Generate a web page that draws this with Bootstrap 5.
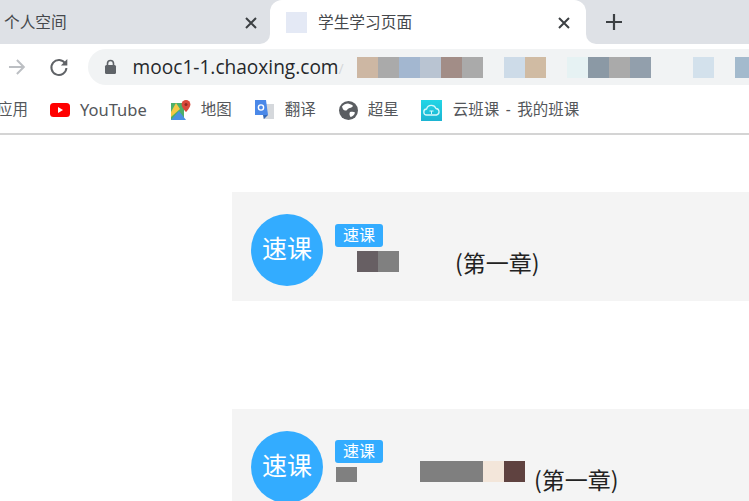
<!DOCTYPE html>
<html lang="zh-CN">
<head>
    <meta charset="UTF-8">
    <title>学生学习页面</title>
    <link href="https://cdn.jsdelivr.net/npm/bootstrap@5.3.0/dist/css/bootstrap.min.css" rel="stylesheet">
    <script src="https://cdn.jsdelivr.net/npm/bootstrap@5.3.0/dist/js/bootstrap.bundle.min.js"></script>
    <style>
        html, body { height: 100%; overflow: hidden; }
        body { font-family: "Noto Sans", "Noto Sans CJK SC", sans-serif; background: #fff; }

        /* tab strip */
        .tab-strip { height: 44px; background: linear-gradient(#dee1e6 50%, #fff 50%); font-size: 15.7px; color: #45484c; }
        .tab-off { width: 270px; background: #dee1e6; border-bottom-right-radius: 10px; padding: 1px 13px 0 4px; }
        .tab-on { width: 316px; background: #fff; border-radius: 12px 12px 0 0; padding: 1px 16px 0 16px; }
        .tab-rest { background: #dee1e6; border-bottom-left-radius: 10px; padding-left: 19px; }
        .fav-box { width: 21px; height: 21px; background: #e4e9f5; margin-right: 11px; }

        /* address row */
        .tool-row { height: 44px; padding-top: 5px; }
        .nav-arrow { margin-left: 7px; margin-right: 22px; }
        .addr-bar { height: 36px; margin-left: 19px; background: #f1f3f4; border-radius: 18px 0 0 18px; padding-left: 16px; }
        .addr-url { font-family: "Open Sans", sans-serif; font-size: 19.1px; color: #26282b; margin-left: 16px; width: 224px; flex-shrink: 0; white-space: nowrap; }
        .addr-slash { color: #d5d7d9; font-size: 14px; }
        .px { display: block; width: 21px; height: 21px; flex-shrink: 0; }
        .gap-1px { width: 21px; flex-shrink: 0; }

        /* bookmarks */
        .mark-row { height: 47px; border-bottom: 2px solid #d4d4d4; font-size: 15.5px; color: #54575b; white-space: nowrap; padding-bottom: 1px; }
        .mark-item { flex-shrink: 0; }
        .mark-item svg { margin-right: 10px; flex-shrink: 0; }
        .mark-latin { font-size: 16.5px; }
        .mark-long { word-spacing: 2.5px; }

        /* course cards */
        .course-box { margin: 57px 0 108px 232px; height: 109px; background: #f4f4f4; padding: 22px 0 0 19px; }
        .course-box.last-box { margin-bottom: 0; }
        .course-dot { width: 72px; height: 72px; border-radius: 50%; background: #33acff; color: #fff; font-size: 25px; flex-shrink: 0; padding-bottom: 2px; }
        .course-tag { width: 48px; height: 23px; background: #33acff; color: #fff; font-size: 16px; border-radius: 3px; line-height: 23px; text-align: center; }
        .course-col { margin-left: 12px; margin-top: 10px; }
        .course-title { font-family: "Noto Sans CJK SC", sans-serif; font-size: 23px; color: #222; line-height: 28px; white-space: nowrap; }
    </style>
</head>
<body>
    <!-- tabs -->
    <div class="tab-strip d-flex">
        <div class="tab-off d-flex align-items-center justify-content-between">
            <span>个人空间</span>
            <svg width="12" height="12" viewBox="0 0 12 12"><path d="M1 1l10 10M11 1L1 11" stroke="#3c4043" stroke-width="2" fill="none"/></svg>
        </div>
        <div class="tab-on d-flex align-items-center">
            <span class="fav-box"></span>
            <span class="flex-grow-1">学生学习页面</span>
            <svg width="12" height="12" viewBox="0 0 12 12"><path d="M1 1l10 10M11 1L1 11" stroke="#3c4043" stroke-width="2" fill="none"/></svg>
        </div>
        <div class="tab-rest flex-grow-1 d-flex align-items-center">
            <svg width="18" height="18" viewBox="0 0 18 18"><path d="M9 1v16M1 9h16" stroke="#3c4043" stroke-width="2.2" fill="none"/></svg>
        </div>
    </div>

    <!-- address bar -->
    <div class="tool-row d-flex align-items-start">
        <svg class="nav-arrow mt-2" width="20" height="20" viewBox="0 0 20 20"><path d="M2 10h15M10 3l7 7-7 7" stroke="#bcbfc3" stroke-width="2" fill="none"/></svg>
        <svg class="mt-2" width="20" height="20" viewBox="0 0 20 20"><path d="M16.5 6.5A7.6 7.6 0 1 0 17.6 11" stroke="#606367" stroke-width="2" fill="none"/><path d="M18.5 2v6.5H12z" fill="#606367"/></svg>
        <div class="addr-bar flex-grow-1 d-flex align-items-center overflow-hidden">
            <svg width="13" height="16" viewBox="0 0 13 16" class="flex-shrink-0"><path d="M3.5 7V4.5a3 3 0 0 1 6 0V7" stroke="#5f6368" stroke-width="1.6" fill="none"/><rect x="1" y="6" width="11" height="9" rx="1.5" fill="#5f6368"/></svg>
            <span class="addr-url">mooc1-1.chaoxing.com<span class="addr-slash">/</span></span>
            <span class="px" style="background:#cdb7a3"></span>
            <span class="px" style="background:#aaaaaa"></span>
            <span class="px" style="background:#a3b7d0"></span>
            <span class="px" style="background:#b9c4d2"></span>
            <span class="px" style="background:#a28d87"></span>
            <span class="px" style="background:#aaaaaa"></span>
            <span class="gap-1px"></span>
            <span class="px" style="background:#cddbe8"></span>
            <span class="px" style="background:#d0bba3"></span>
            <span class="gap-1px"></span>
            <span class="px" style="background:#e6f2f3"></span>
            <span class="px" style="background:#8b99a5"></span>
            <span class="px" style="background:#aaaaaa"></span>
            <span class="px" style="background:#929fac"></span>
            <span class="gap-1px"></span>
            <span class="gap-1px"></span>
            <span class="px" style="background:#d3e1ec"></span>
            <span class="gap-1px"></span>
            <span class="px" style="background:#a3bacd"></span>
        </div>
    </div>

    <!-- bookmarks -->
    <div class="mark-row d-flex align-items-center overflow-hidden">
        <span class="mark-item" style="margin-left:-3px;margin-right:22px">应用</span>
        <span class="mark-item mark-latin d-flex align-items-center" style="margin-right:24px">
            <svg width="20" height="14" viewBox="0 0 20 14"><rect width="20" height="14" rx="3.5" fill="#f00"/><path d="M8 4l5 3-5 3z" fill="#fff"/></svg>YouTube
        </span>
        <span class="mark-item d-flex align-items-center" style="margin-right:22px">
            <svg width="20" height="20" viewBox="0 0 20 20"><path d="M0 3h13v17H0z" fill="#4caf6a"/><path d="M0 20L8 11l7 9z" fill="#4a90e2"/><path d="M5 3l4 6-9 8v-5z" fill="#f5c945"/><path d="M15 0a4.4 4.4 0 0 1 4.4 4.4C19.400 7.500 15 12 15 12s-4.400-4.500-4.400-7.600A4.400 4.400 0 0 1 15 0z" fill="#d9483b"/><circle cx="15" cy="4.500" r="1.500" fill="#8f2b22"/></svg>地图
        </span>
        <span class="mark-item d-flex align-items-center" style="margin-right:23px">
            <svg width="21" height="22" viewBox="0 0 21 22"><path d="M9 5h11v15H9z" fill="#d5d8dc"/><path d="M1 1h11l2 15H1z" fill="#4a88e8"/><path d="M9 16l1 4 4-4z" fill="#3569b8"/><circle cx="7" cy="8.500" r="2.600" fill="none" stroke="#fff" stroke-width="1.400"/></svg>翻译
        </span>
        <span class="mark-item d-flex align-items-center" style="margin-right:22px">
            <svg width="19" height="19" viewBox="0 0 19 19"><circle cx="9.500" cy="9.500" r="9.500" fill="#5a5d61"/><path d="M9 2.500c2 .5 4 1 5 2.500-1 2-3 1.500-4.500 2.500S8 10 6 9.500 3.500 7 3 5.500C4.500 3.500 7 2.500 9 2.500zM11 11c2-.5 4-.5 5 .5-.5 2.500-2.500 4-4.500 4.500-1-1.500-1.500-3.500-.5-5z" fill="#fff"/></svg>超星
        </span>
        <span class="mark-item mark-long d-flex align-items-center">
            <svg style="margin-right:11px" width="21" height="21" viewBox="0 0 21 21"><defs><linearGradient id="cloudBg" x1="0" y1="0" x2="0" y2="1"><stop offset="0" stop-color="#22d6e6"/><stop offset="1" stop-color="#1cb4d2"/></linearGradient></defs><rect width="21" height="21" fill="url(#cloudBg)"/><path d="M6 15a3 3 0 0 1-.4-6A5 5 0 0 1 15 8.500 3.300 3.300 0 0 1 15.500 15z" fill="none" stroke="#d6f8fb" stroke-width="1.300"/><path d="M8.500 11h4M10.500 11v3" stroke="#d6f8fb" stroke-width="1"/></svg>云班课 - 我的班课
        </span>
    </div>

    <!-- course 1 -->
    <div class="course-box d-flex">
        <div class="course-dot d-flex align-items-center justify-content-center">速课</div>
        <div class="course-col flex-grow-1">
            <div class="course-tag">速课</div>
            <div class="d-flex align-items-start" style="margin-top:4px;margin-left:22px">
                <span class="px" style="background:#675f63"></span>
                <span class="px" style="background:#808080"></span>
                <span class="course-title" style="margin-left:56px;margin-top:-3px">(第一章)</span>
            </div>
        </div>
    </div>

    <!-- course 2 -->
    <div class="course-box last-box d-flex">
        <div class="course-dot d-flex align-items-center justify-content-center">速课</div>
        <div class="course-col flex-grow-1" style="margin-top:9px">
            <div class="course-tag">速课</div>
            <div class="d-flex align-items-start" style="margin-top:-2px;margin-left:1px">
                <span class="px" style="background:#808080;height:15px;margin-top:6px"></span>
                <span class="px" style="margin-left:63px;width:63px;background:#7f7f7f"></span>
                <span class="px" style="background:#f3e6da"></span>
                <span class="px" style="background:#5f4240"></span>
                <span class="course-title" style="margin-left:9px;margin-top:4px">(第一章)</span>
            </div>
        </div>
    </div>
</body>
</html>
